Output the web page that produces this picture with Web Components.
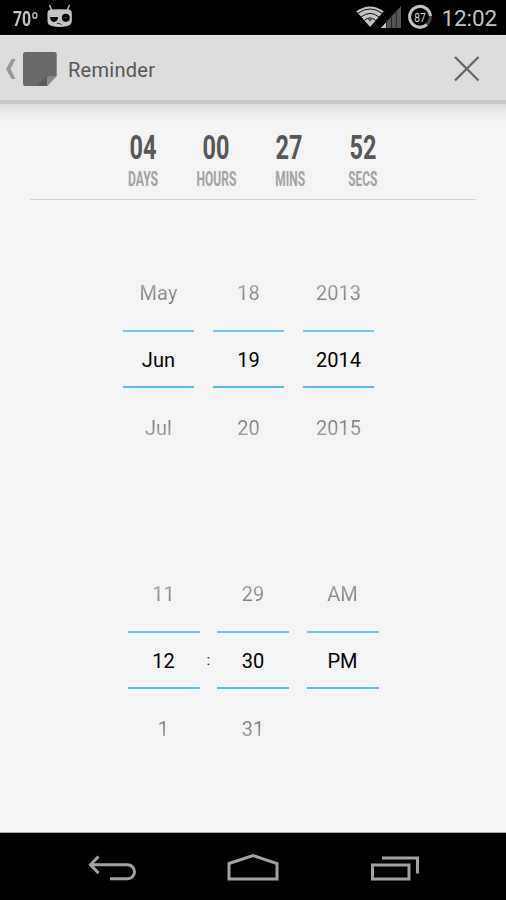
<!DOCTYPE html>
<html lang="en"><head><meta charset="utf-8"><title>Reminder</title>
<style>html,body{margin:0;background:#f4f4f4}</style></head>
<body><reminder-screen></reminder-screen>
<script>
const define=(name,html,init)=>customElements.define(name,class extends HTMLElement{
  constructor(){super();this.attachShadow({mode:'open'}).innerHTML=html;}
  connectedCallback(){if(init)init.call(this,this.shadowRoot);}
});

define('status-bar',`<style>
:host{display:flex;height:35px;background:#000;color:#c4c4c4;box-sizing:border-box;align-items:flex-start}
.temp{width:27px;margin-left:12.5px;height:35px;font-weight:700;font-size:20px;line-height:38px;transform:scaleX(.79);transform-origin:0 0;white-space:nowrap}
.clock{font-size:22.5px;line-height:37px;margin-left:7px;letter-spacing:-.1px}
svg{display:block}.droid{margin-left:6px}.radio{margin-left:auto}
.end{width:9px}
</style>
<span class="temp">70º</span>
<svg class="droid" width="28" height="35" viewBox="45.5 0 28 35"><path d="M49 5l2.200 5M69 5l-2.200 5" stroke="#bcbcbc" stroke-width="1.500"/><path d="M50 9.500Q59 8.800 68.500 9.500Q71.300 10 71.300 13V21Q71.300 25 67 26Q59 28 51.500 26Q47 25 47 21V13Q47 10 50 9.500Z" fill="#c4c4c4"/><path d="M49.500 17H57.500C57.500 23.500 49.500 23.500 49.500 17Z" fill="#000"/><circle cx="65.300" cy="17.800" r="4"/><circle cx="65.300" cy="17.800" r=".7" fill="#777"/><path d="M56.500 23.300q2.500-.2 4.500 1.200" stroke="#222" fill="none" stroke-width="1"/></svg>
<svg class="radio" width="78" height="35" viewBox="357 0 78 35"><path d="M371 27L357.300 11.200Q371 1.800 384.700 11.200Z" fill="#c4c4c4"/><g fill="none" stroke="#111" stroke-width="1"><path d="M359 13.200Q371 4.700 383 13.200M362 17Q371 9.800 380 17M365.300 20.400Q371 15.300 376.700 20.400"/></g><path d="M368 18.500l3 3.300 3-3.300z" fill="#555"/>
<path d="M382 28L402 6V28Z" fill="#555"/><path d="M382 28L387 22.500V28Z" fill="#c8c8c8"/><path d="M387.500 20v8M392.500 15v13M397.300 10v18" stroke="#222" stroke-width=".9"/>
<circle cx="421" cy="16.800" r="10.400" fill="none" stroke="#444" stroke-width="3"/><path d="M431.400 16A10.400 10.400 0 1 0 427.800 24.700" fill="none" stroke="#c4c4c4" stroke-width="3"/><text x="421" y="21.500" text-anchor="middle" textLength="11.500" lengthAdjust="spacingAndGlyphs" font-family="Roboto,sans-serif" font-size="13.500" fill="#d4d4d4">87</text></svg>
<span class="clock">12:02</span><span class="end"></span>`);

define('action-bar',`<style>
:host{display:flex;align-items:center;height:69px;box-sizing:border-box;background:#ddd;border-top:1px solid #e4e4e4;border-bottom:4px solid #cacaca;color:#565656}
svg{display:block;flex:none}.title{font-size:20px;line-height:24px;margin-left:11px;letter-spacing:.28px;padding-top:3px}
.close{margin-left:auto;margin-right:24px}
</style>
<svg width="57" height="64" viewBox="0 36 57 64"><path d="M11.500 59h4l-4.800 10 4.800 10h-4L6 69z" fill="#999"/><path d="M25.500 52h29q2.200 0 2.200 2.200V76L47 86H25.500Q23 86 23 83.500V54.500Q23 52 25.500 52Z" fill="#696969"/><path d="M37 85.800L47 76v9.800Z" fill="#5b5b5b"/><path d="M47 86V78.500Q47 76 49.500 76H56.700Z" fill="#8a8a8a"/></svg>
<span class="title"><slot></slot></span>
<svg class="close" width="28" height="64" viewBox="454 36 28 64"><path d="M455 57l23.500 23.500M478.500 57L455 80.500" stroke="#666" stroke-width="2.300"/></svg>`);

define('count-unit',`<style>
:host{display:flex;flex-direction:column;align-items:center;width:73.200px;white-space:nowrap}
b{font-size:33.500px;line-height:40px;color:#585858;transform:translateX(-.3px) scaleX(.7)}
span{font-size:20px;line-height:24px;margin-top:-1px;color:#a3a3a3;font-weight:700;transform:translateX(.3px) scaleX(var(--s))}
</style><b></b><span></span>`,function(r){
 r.querySelector('b').textContent=this.getAttribute('value');
 r.querySelector('span').textContent=this.getAttribute('label');
 this.style.setProperty('--s',this.getAttribute('fit'));
});

define('number-picker',`<style>
:host{display:block;width:71.500px;text-align:center;font-size:20px;letter-spacing:.05px}
div{box-sizing:border-box;white-space:nowrap}
.side{height:70px;line-height:66px;background:linear-gradient(#aaa 30%,#777 65%);background-clip:text;-webkit-background-clip:text;color:transparent}
.mid{height:58px;border-top:2px solid #6dc9eb;border-bottom:2px solid #4fbfe6;line-height:56px;color:#000}
.next{background:linear-gradient(#777 42%,#aaa 75%);background-clip:text;-webkit-background-clip:text;line-height:80px}
</style><div class="side"></div><div class="mid"></div><div class="side next"></div>`,function(r){
 const v=this.getAttribute('values').split(',');
 r.querySelectorAll('div').forEach((d,i)=>d.textContent=v[i]);
});

define('nav-bar',`<style>
:host{display:flex;height:68px;box-sizing:border-box;border-top:1px solid #aaa;background:#000;padding-left:56px;justify-content:flex-start}
svg{display:block}
</style>
<svg width="113" height="67" viewBox="56 833 113 67" fill="none" stroke="#a2a2a2" stroke-width="3"><path d="M98.500 856.500l-8 8.300 8 8.300M91 864.800H127.500a7 7 0 0 1 0 14H110"/></svg>
<svg width="168" height="67" viewBox="169 833 168 67" fill="none" stroke="#a2a2a2" stroke-width="3"><path d="M229 863.500L253 855.500 277 863.500V879H229Z"/></svg>
<svg width="113" height="67" viewBox="337 833 113 67" fill="none" stroke="#a2a2a2" stroke-width="3"><path d="M372.500 865H409V879H372.500ZM382 858H417.500V873.500"/></svg>`);

define('reminder-screen',`<style>
:host{display:flex;flex-direction:column;width:506px;height:900px;background:#f4f4f4;font-family:Roboto,"Noto Sans",sans-serif;overflow:hidden}
main{flex:1;background:linear-gradient(#dedede,#eeeeee 10px,#f4f4f4 19px)}
.count{display:flex;justify-content:center;height:96px;margin:0 30px;box-sizing:border-box;padding-top:24px;border-bottom:1px solid #d4d4d4}
.row{display:flex;justify-content:center}
.date{gap:18.500px;padding-top:60px;margin-right:9px}
.time{padding-top:103px}
.time number-picker{width:72px}
.colon{width:17.500px;text-align:center;line-height:198px;font-size:15px;color:#222}
.gap{width:17.500px}
</style>
<status-bar></status-bar><action-bar>Reminder</action-bar>
<main>
<div class="count"><count-unit value="04" label="DAYS" fit=".61"></count-unit><count-unit value="00" label="HOURS" fit=".6"></count-unit><count-unit value="27" label="MINS" fit=".6"></count-unit><count-unit value="52" label="SECS" fit=".59"></count-unit></div>
<div class="row date"><number-picker values="May,Jun,Jul"></number-picker><number-picker values="18,19,20"></number-picker><number-picker values="2013,2014,2015"></number-picker></div>
<div class="row time"><number-picker values="11,12,1"></number-picker><span class="colon">:</span><number-picker values="29,30,31"></number-picker><span class="gap"></span><number-picker values="AM,PM,"></number-picker></div>
</main><nav-bar></nav-bar>`);
</script></body></html>
